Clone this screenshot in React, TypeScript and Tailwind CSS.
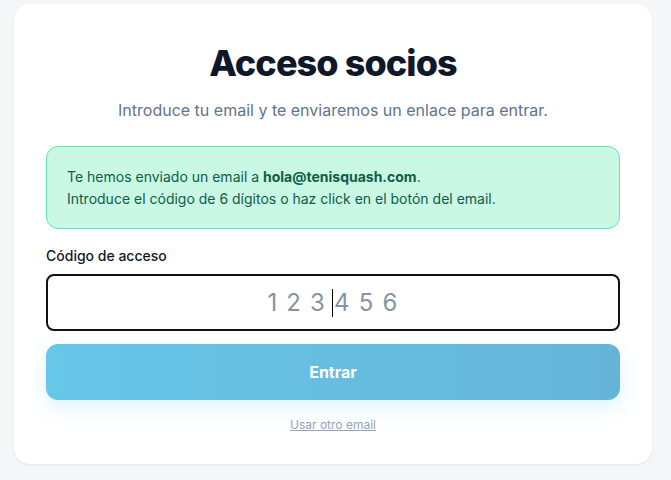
import React from "react";

const inter = "font-['Inter','Noto_Sans',sans-serif]";

/**
 * Login card: members access with a one-time code
 */
export default function App() {
  return (
    <div className={`min-h-screen bg-[#f5f6f8] pt-1 pl-[14px] ${inter}`}>
      <div className="w-[638px] rounded-2xl bg-white px-8 pt-[39px] pb-[29px] shadow-[0_1px_3px_rgba(15,23,42,0.08)]">
        {/* Heading */}
        <h1 className="text-center text-4xl font-extrabold tracking-tight text-[#0f172a]">
          Acceso socios
        </h1>
        <p className="mt-[15px] text-center text-base text-[#64748b]">
          Introduce tu email y te enviaremos un enlace para entrar.
        </p>

        {/* Notice */}
        <div className="mt-6 rounded-xl border border-[#5ee6b8] bg-[#c9f8e4] px-5 pt-[19px] pb-[18px] text-sm leading-[22px] text-[#0f5c48]">
          <p>
            Te hemos enviado un email a{" "}
            <span className="font-bold">hola@tenisquash.com</span>.
          </p>
          <p>Introduce el código de 6 dígitos o haz click en el botón del email.</p>
        </div>

        {/* Code field */}
        <label className="mt-[17px] mb-2 block text-sm font-medium text-[#111827]">
          Código de acceso
        </label>
        <div className="relative">
          <input
            type="text"
            inputMode="numeric"
            placeholder="1 2 3 4 5 6"
            className="block h-[57px] w-full rounded-lg border-2 border-[#111111] bg-white text-center text-2xl tracking-[1.2px] text-[#111827] outline-none placeholder:text-[#8993a3]"
          />
          {/* caret */}
          <span className="pointer-events-none absolute left-[286px] top-[15px] h-[28px] w-px bg-black" />
        </div>

        {/* Submit */}
        <button
          type="button"
          disabled
          className="mt-[13px] flex h-[56px] w-full items-center justify-center rounded-xl bg-gradient-to-r from-[#67c7e9] to-[#65b4d7] text-base font-bold text-white shadow-[0_8px_20px_rgba(125,211,252,0.25)]"
        >
          Entrar
        </button>

        <div className="mt-[11px] text-center">
          <a href="#" className="text-xs leading-4 text-[#94a3b8] underline">
            Usar otro email
          </a>
        </div>
      </div>
    </div>
  );
}
